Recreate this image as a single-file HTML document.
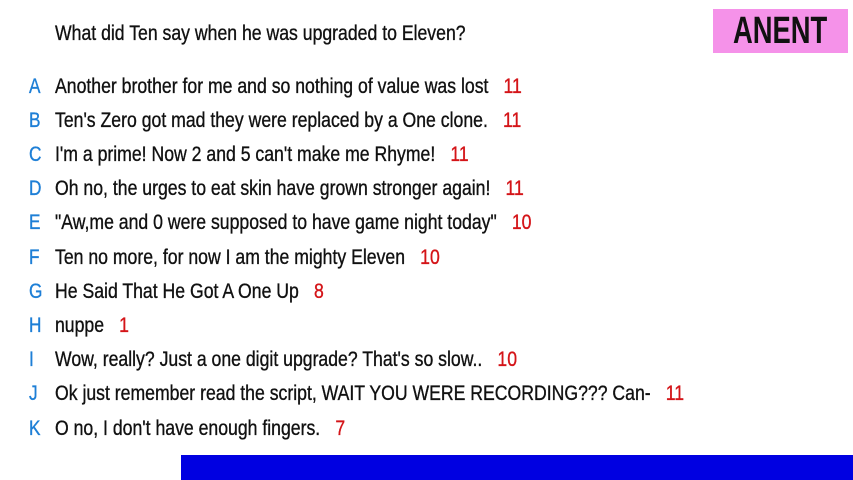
<!DOCTYPE html>
<html><head><meta charset="utf-8"><style>
body{margin:0;width:853px;height:480px;background:#fff;position:relative;overflow:hidden;font-family:"Liberation Sans",sans-serif;}
.t{position:absolute;white-space:nowrap;transform:scaleX(0.84);transform-origin:0 50%;font-size:21px;line-height:24px;color:#111;-webkit-text-stroke:0.35px #111;}
.l{position:absolute;left:29px;font-size:21px;line-height:24px;color:#1e7fd6;transform:scaleX(0.82);transform-origin:0 50%;-webkit-text-stroke:0.35px #1e7fd6;}
.n{color:#d41418;margin-left:18px;-webkit-text-stroke:0.35px #d41418;}
#logo{position:absolute;left:713px;top:9px;width:135px;height:44px;background:#f592e9;}
#logo span{position:absolute;left:20px;top:3px;font-size:38px;line-height:38px;font-weight:bold;color:#111;transform:scaleX(0.72);transform-origin:0 50%;}
#bar{position:absolute;left:181px;top:455px;width:672px;height:25px;background:#0000e1;}
</style></head><body>
<div class="t" style="left:55px;top:22px">What did Ten say when he was upgraded to Eleven?</div>
<div id="logo"><span>ANENT</span></div>
<div class="l" style="top:75px">A</div><div class="t" style="left:55px;top:75px">Another brother for me and so nothing of value was lost<span class="n">11</span></div>
<div class="l" style="top:109px">B</div><div class="t" style="left:55px;top:109px">Ten's Zero got mad they were replaced by a One clone.<span class="n">11</span></div>
<div class="l" style="top:143px">C</div><div class="t" style="left:55px;top:143px">I'm a prime! Now 2 and 5 can't make me Rhyme!<span class="n">11</span></div>
<div class="l" style="top:177px">D</div><div class="t" style="left:55px;top:177px">Oh no, the urges to eat skin have grown stronger again!<span class="n">11</span></div>
<div class="l" style="top:211px">E</div><div class="t" style="left:55px;top:211px">"Aw,me and 0 were supposed to have game night today"<span class="n">10</span></div>
<div class="l" style="top:246px">F</div><div class="t" style="left:55px;top:246px">Ten no more, for now I am the mighty Eleven<span class="n">10</span></div>
<div class="l" style="top:280px">G</div><div class="t" style="left:55px;top:280px">He Said That He Got A One Up<span class="n">8</span></div>
<div class="l" style="top:314px">H</div><div class="t" style="left:55px;top:314px">nuppe<span class="n">1</span></div>
<div class="l" style="top:348px">I</div><div class="t" style="left:55px;top:348px">Wow, really? Just a one digit upgrade? That's so slow..<span class="n">10</span></div>
<div class="l" style="top:382px">J</div><div class="t" style="left:55px;top:382px">Ok just remember read the script, WAIT YOU WERE RECORDING??? Can-<span class="n">11</span></div>
<div class="l" style="top:417px">K</div><div class="t" style="left:55px;top:417px">O no, I don't have enough fingers.<span class="n">7</span></div>
<div id="bar"></div>
</body></html>
